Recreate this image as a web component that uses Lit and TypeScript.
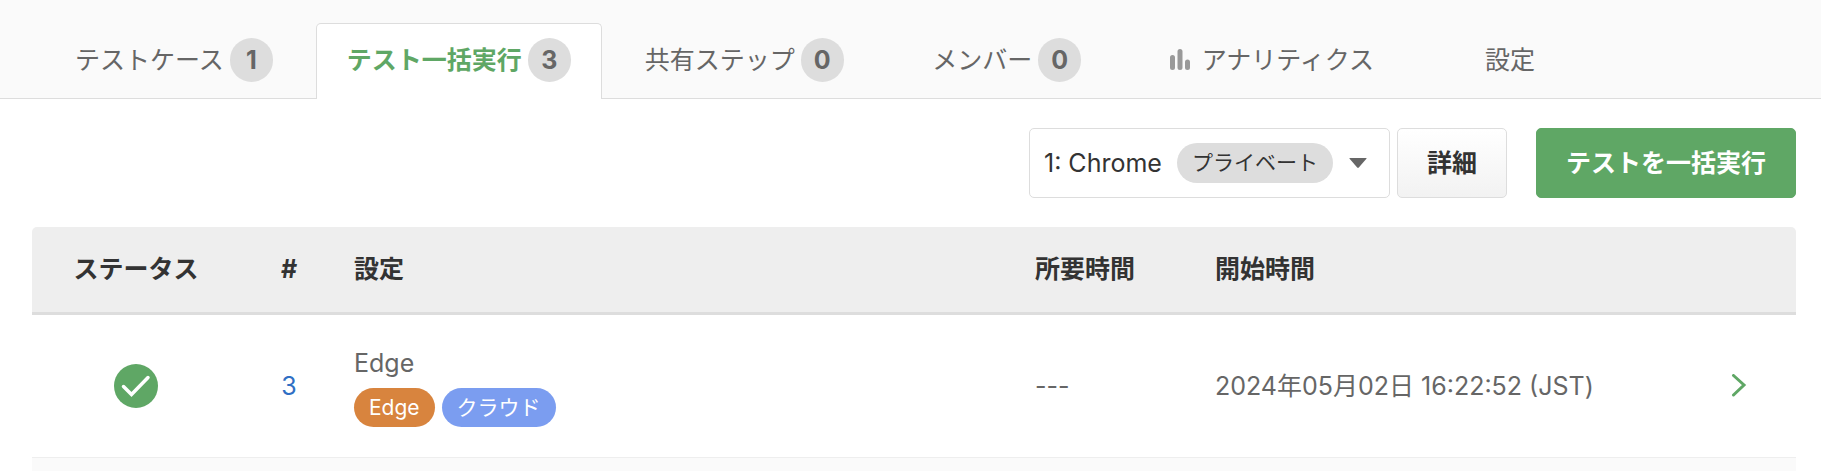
import { LitElement, html, css, svg, nothing } from "lit";
import { customElement } from "lit/decorators.js";

interface Tab {
  label: string;
  count?: number;
  active?: boolean;
  icon?: boolean;
  size?: string;
}

const TABS: Tab[] = [
  { label: "テストケース", count: 1 },
  { label: "テスト一括実行", count: 3, active: true },
  { label: "共有ステップ", count: 0 },
  { label: "メンバー", count: 0, size: "wide" },
  { label: "アナリティクス", icon: true },
  { label: "設定", size: "narrow" },
];

const barsIcon = html`<svg class="bars" viewBox="0 0 20 24" aria-hidden="true">
  ${svg`<path d="M2.500 9.500v10M10 3.500v16M17.500 14v5.500" fill="none" stroke="#999" stroke-width="5" stroke-linecap="round"/>`}
</svg>`;

@customElement("tab-bar")
class TabBar extends LitElement {
  static styles = css`
    :host { display: block; }
    .bar {
      display: flex;
      align-items: flex-end;
      gap: 12px;
      padding: 23px 44px 0;
      background: #fafafa;
      box-shadow: inset 0 -1px #ddd;
    }
    .tab {
      box-sizing: border-box;
      display: flex;
      align-items: center;
      justify-content: center;
      height: 76px;
      padding: 0 30px 3px;
      border: 1px solid transparent;
      border-bottom: 0;
      border-radius: 5px 5px 0 0;
      color: #666;
      text-decoration: none;
      white-space: nowrap;
      gap: 6px;
    }
    .active { background: #fff; border-color: #ddd; color: #5fa765; font-weight: 700; }
    .wide { min-width: 240px; }
    .narrow { min-width: 186px; }
    .count {
      min-width: 43px;
      height: 44px;
      border-radius: 22px;
      background: #ddd;
      color: #666;
      font-weight: 700;
      line-height: 44px;
      text-align: center;
    }
    .bars { width: 20px; height: 24px; margin-right: 6px; }
  `;
  render() {
    return html`<nav class="bar">
      ${TABS.map(
        (t) => html`<a href="#" class="tab ${t.active ? "active" : ""} ${t.size ?? ""}">
          ${t.icon ? barsIcon : nothing}<span>${t.label}</span>
          ${t.count === undefined ? nothing : html`<span class="count">${t.count}</span>`}
        </a>`
      )}
    </nav>`;
  }
}

@customElement("run-toolbar")
class RunToolbar extends LitElement {
  static styles = css`
    :host { display: flex; justify-content: flex-end; padding: 29px 25px; }
    button {
      height: 70px;
      box-sizing: border-box;
      font: inherit;
      color: #333;
      border: 1px solid #ddd;
      border-radius: 5px;
      background: #fff;
      padding: 0 29px;
      white-space: nowrap;
    }
    .picker { display: flex; align-items: center; gap: 15px; width: 361px; padding: 0 22px 0 14px; }
    .chip { background: #ddd; border-radius: 20px; height: 40px; line-height: 40px; padding: 0 15px; font-size: 21px; }
    .caret { width: 18px; height: 10px; margin-left: auto; }
    .detail { margin-left: 7px; font-weight: 700; background: linear-gradient(#fff, #f2f2f2); }
    .run { margin-left: 29px; font-weight: 700; color: #fff; background: #5fa765; border-color: #5fa765; }
  `;
  render() {
    return html`
      <button class="picker" aria-haspopup="listbox">
        <span>1: Chrome</span><span class="chip">プライベート</span>
        <svg class="caret" viewBox="0 0 18 10" aria-hidden="true"><path d="M1 0h16q1 0 .4.800L9.800 9.500q-.8.900-1.600 0L.6.800Q0 0 1 0z" fill="#666"/></svg>
      </button>
      <button class="detail">詳細</button>
      <button class="run">テストを一括実行</button>
    `;
  }
}

@customElement("run-table")
class RunTable extends LitElement {
  static styles = css`
    :host { display: block; padding: 0 25px 0 32px; }
    table { width: 100%; border-collapse: separate; border-spacing: 0; table-layout: fixed; }
    .c-status { width: 208px; }
    .c-id { width: 98px; }
    .c-time { width: 180px; }
    .c-start { width: 482px; }
    .c-go { width: 115px; }
    th { height: 83px; padding: 0 16px 2px; background: #eee; border-bottom: 3px solid #ddd; color: #333; text-align: left; }
    th:first-child { border-top-left-radius: 5px; }
    th:last-child { border-top-right-radius: 5px; }
    td { height: 142px; padding: 0 16px; border-bottom: 1px solid #eee; color: #666; }
    .center { text-align: center; }
    .next td { background: #fafafa; }
    .id { color: #2f6fc4; text-decoration: none; }
    .name { line-height: 34px; }
    .tags { display: flex; gap: 7px; margin-top: 8px; }
    .tag { height: 39px; line-height: 39px; border-radius: 20px; padding: 0 15px; font-size: 21px; color: #fff; }
    .edge { background: #d8843e; }
    .cloud { background: #7b9df0; }
    .ok { display: block; width: 44px; height: 44px; margin: 0 auto; }
    .go { display: block; width: 16px; height: 24px; margin: 0 auto; }
  `;
  render() {
    return html`<table>
      <colgroup>
        <col class="c-status" /><col class="c-id" /><col /><col class="c-time" /><col class="c-start" /><col class="c-go" />
      </colgroup>
      <thead>
        <tr>
          <th class="center">ステータス</th><th class="center">#</th><th>設定</th><th>所要時間</th><th>開始時間</th><th></th>
        </tr>
      </thead>
      <tbody>
        <tr>
          <td><svg class="ok" viewBox="0 0 44 44" role="img" aria-label="成功"><circle cx="22" cy="22" r="22" fill="#5fa765"/><path d="M9.500 22.500L17.500 30.500L34 13.500" fill="none" stroke="#fff" stroke-width="3.500" stroke-linecap="round" stroke-linejoin="miter"/></svg></td>
          <td class="center"><a class="id" href="#">3</a></td>
          <td>
            <div class="name">Edge</div>
            <div class="tags"><span class="tag edge">Edge</span><span class="tag cloud">クラウド</span></div>
          </td>
          <td>---</td>
          <td>2024年05月02日 16:22:52 (JST)</td>
          <td><a href="#" aria-label="詳細を開く"><svg class="go" viewBox="0 0 16 24"><path d="M2.500 1.500L13 11L2.500 21" fill="none" stroke="#5fa765" stroke-width="3" stroke-linecap="round"/></svg></a></td>
        </tr>
        <tr class="next"><td colspan="6"></td></tr>
      </tbody>
    </table>`;
  }
}

@customElement("app-root")
class AppRoot extends LitElement {
  static styles = css`
    :host {
      display: block;
      height: 100vh;
      overflow: hidden;
      background: #fff;
      font: 25px/36px Inter, "Noto Sans CJK JP", sans-serif;
    }
  `;
  render() {
    return html`<tab-bar></tab-bar><run-toolbar></run-toolbar><run-table></run-table>`;
  }
}
